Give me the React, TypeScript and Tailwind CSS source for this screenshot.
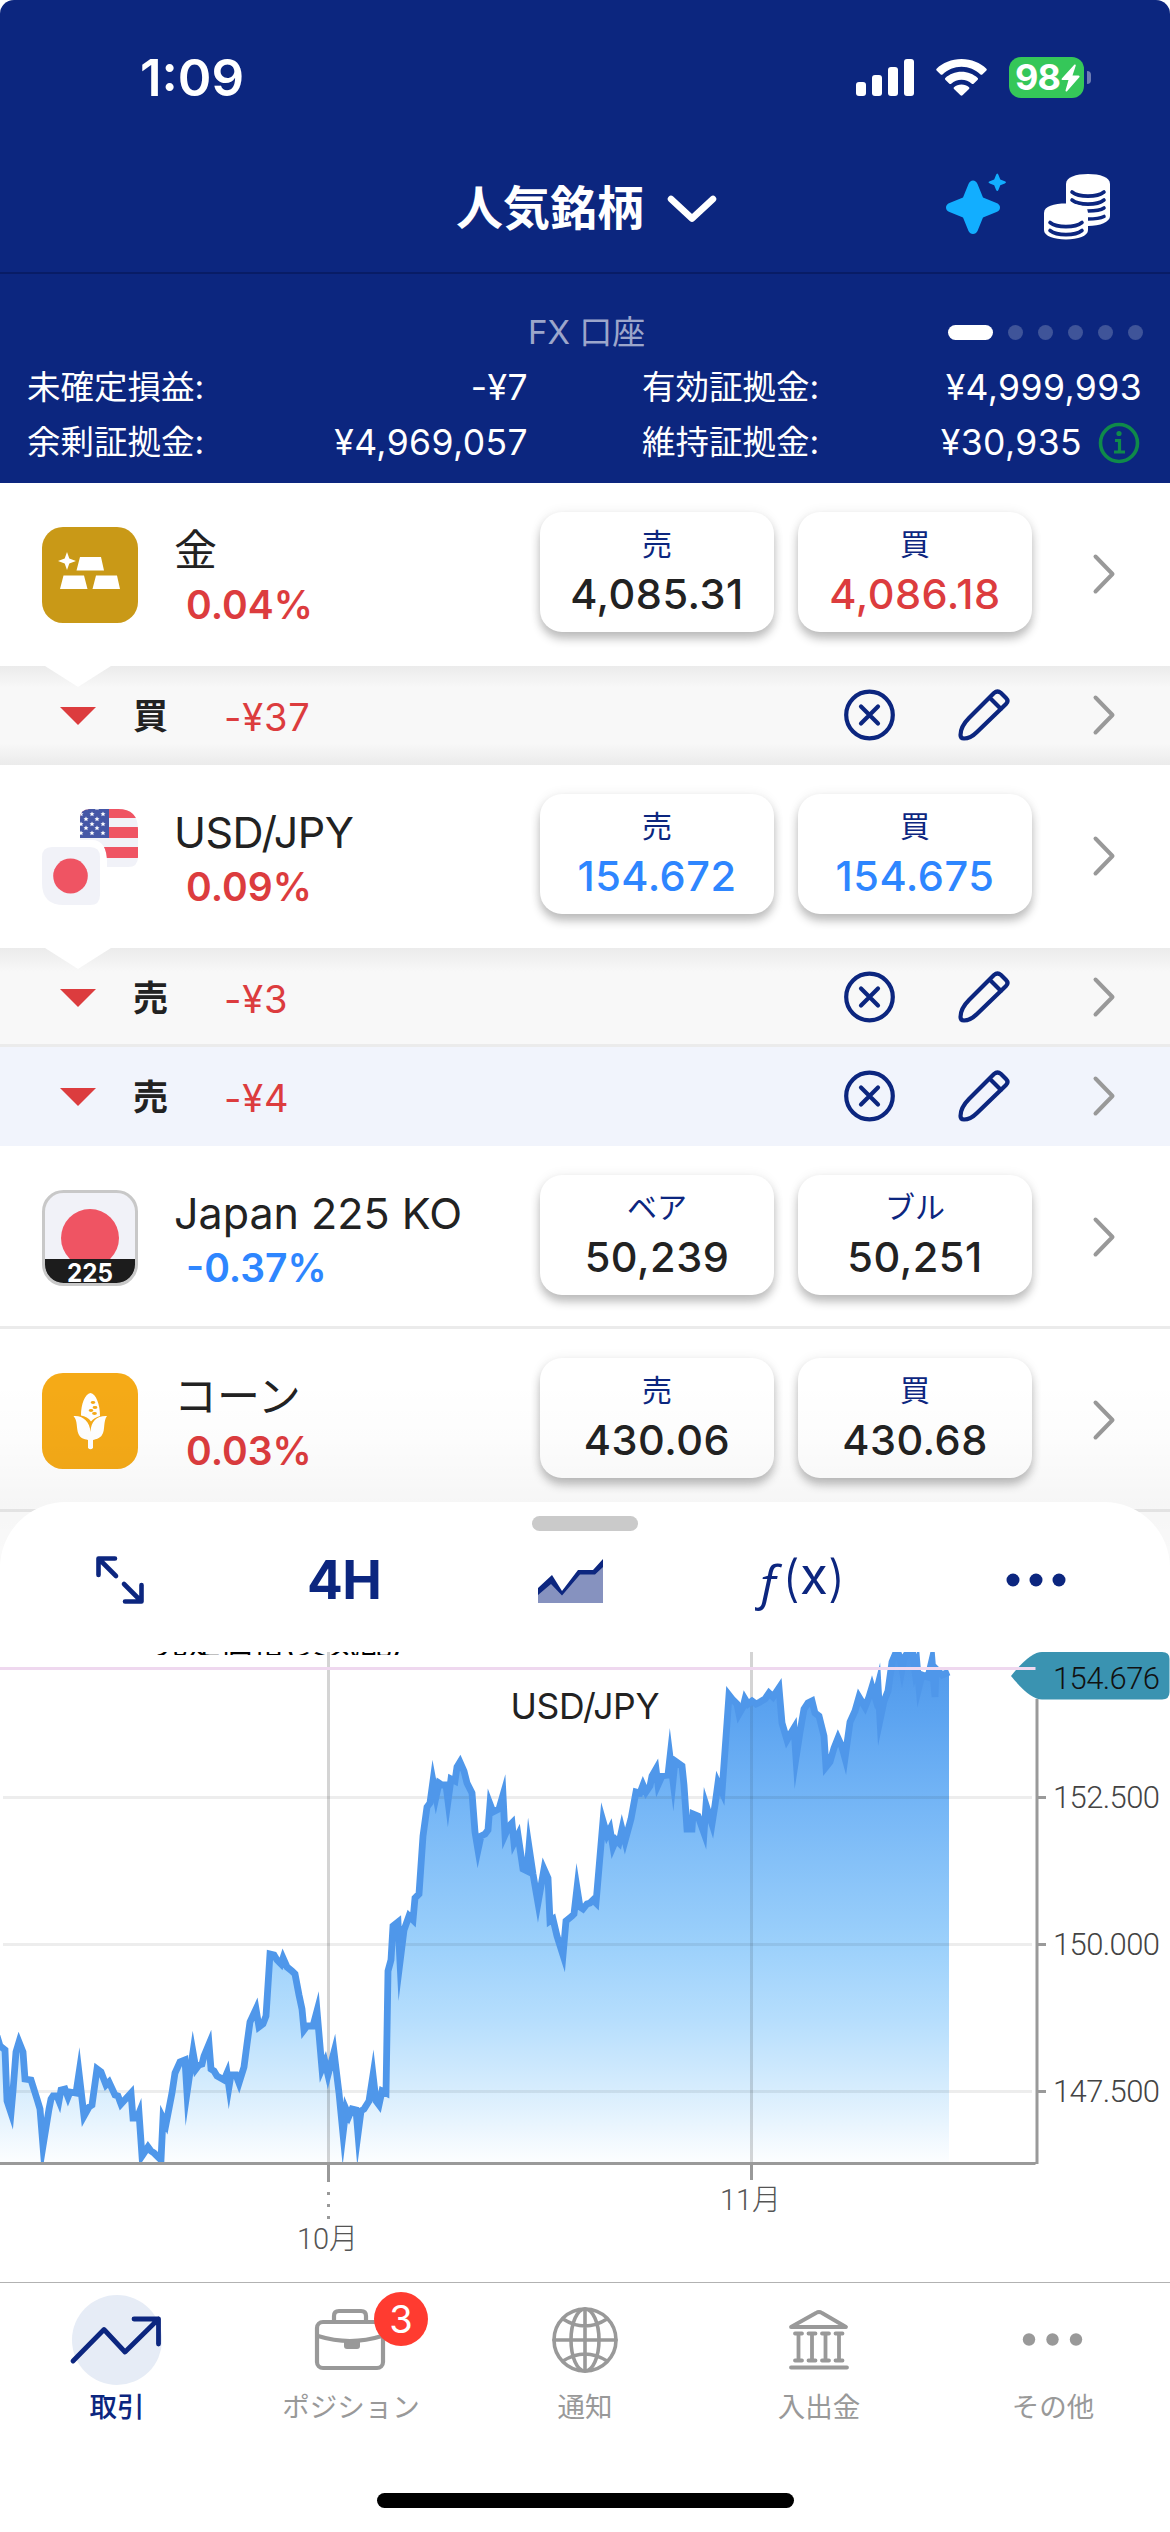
import React from "react";

const NAVY = "#0c267f";

const SERIES: [number, number][] = [
  [-3, 384], [0, 394], [5, 398], [7, 449], [11, 461], [13, 439], [16, 400], [19, 390], [23, 400], [25, 427], [31, 428],
  [37, 447], [40, 457], [43, 494], [49, 457], [51, 447], [53, 444], [57, 444], [59, 449], [61, 438], [65, 437],
  [68, 445], [70, 440], [76, 441], [79, 421], [84, 464], [89, 455], [92, 453], [97, 417], [101, 420], [106, 433],
  [109, 430], [115, 443], [118, 444], [121, 452], [131, 441], [133, 466], [137, 466], [139, 461], [142, 504],
  [148, 495], [151, 499], [154, 501], [161, 508], [163, 466], [166, 472], [172, 441], [175, 421], [180, 410],
  [185, 408], [187, 441], [193, 400], [196, 417], [199, 413], [202, 412], [204, 404], [209, 392], [211, 417],
  [214, 419], [217, 424], [224, 428], [227, 421], [229, 435], [231, 423], [236, 423], [239, 431], [244, 415],
  [247, 392], [250, 370], [256, 357], [259, 375], [263, 372], [266, 364], [270, 302], [274, 303], [277, 308],
  [281, 312], [283, 306], [287, 315], [292, 319], [295, 322], [299, 343], [302, 357], [304, 378], [307, 374],
  [313, 374], [317, 359], [322, 417], [325, 410], [328, 423], [334, 400], [339, 441], [343, 482], [346, 457],
  [349, 464], [352, 457], [356, 458], [358, 482], [361, 459], [364, 457], [369, 449], [373, 423], [376, 449],
  [379, 453], [382, 439], [386, 441], [388, 319], [391, 308], [393, 274], [398, 270], [400, 310], [404, 278],
  [409, 264], [413, 268], [415, 246], [419, 242], [423, 184], [427, 155], [430, 151], [433, 129], [436, 145],
  [439, 131], [442, 133], [446, 133], [448, 149], [451, 127], [455, 129], [457, 115], [460, 110], [464, 119],
  [467, 131], [472, 141], [475, 180], [478, 198], [481, 184], [485, 182], [488, 178], [490, 152], [493, 160],
  [499, 157], [503, 143], [505, 183], [509, 174], [512, 171], [514, 191], [518, 183], [523, 217], [527, 219],
  [529, 195], [533, 222], [538, 251], [544, 217], [548, 226], [550, 269], [553, 267], [557, 284], [563, 303],
  [566, 269], [572, 264], [574, 262], [577, 236], [580, 255], [583, 257], [587, 252], [590, 251], [593, 248],
  [596, 251], [603, 169], [607, 183], [610, 177], [613, 195], [616, 188], [619, 191], [622, 177], [625, 189],
  [631, 167], [636, 140], [640, 141], [643, 133], [646, 140], [650, 134], [652, 124], [656, 117], [658, 133],
  [662, 124], [668, 123], [670, 105], [673, 129], [675, 109], [682, 114], [684, 133], [687, 177], [692, 177],
  [693, 162], [698, 164], [704, 181], [706, 153], [712, 172], [715, 153], [718, 131], [722, 140], [727, 71],
  [729, 43], [733, 48], [737, 52], [739, 62], [743, 55], [745, 47], [748, 52], [752, 49], [756, 52], [760, 50],
  [765, 47], [769, 41], [773, 45], [779, 36], [782, 71], [787, 88], [791, 81], [794, 76], [796, 106], [800, 80],
  [804, 57], [808, 51], [812, 49], [815, 61], [819, 64], [824, 84], [826, 115], [830, 110], [834, 96], [838, 86],
  [842, 95], [845, 106], [850, 70], [855, 59], [859, 45], [865, 55], [869, 45], [872, 35], [875, 45], [878, 33],
  [880, 68], [884, 49], [888, 39], [892, 10], [897, -2], [900, 6], [902, 17], [904, 6], [908, 0], [912, -4],
  [915, 19], [917, 12], [919, 35], [922, 23], [928, 25], [932, 8], [935, 45], [936, 17], [942, 23], [949, 20],
];

const LINE = SERIES.map(([x, y], i) => `${i ? "L" : "M"}${x} ${y}`).join("");

function StatusBar() {
  return (
    <div className="flex h-[156px] items-start text-white">
      <div className="ml-[140px] mt-[48px] w-[110px] text-[51px] leading-[60px] font-semibold tracking-[0px]">1:09</div>
      <svg className="ml-[606px] mt-[59px]" width="58" height="37" fill="#fff">
        <rect x="0" y="23" width="10" height="14" rx="3" />
        <rect x="16" y="16" width="10" height="21" rx="3" />
        <rect x="32" y="8" width="10" height="29" rx="3" />
        <rect x="48" y="0" width="10" height="37" rx="3" />
      </svg>
      <svg className="ml-[22px] mt-[59px]" width="51" height="37" viewBox="0 0 51 37" fill="#fff">
        <path d="M25.5 0C35.500 0 44.300 3.800 50.400 9.700Q51.200 10.600 50.400 11.500L46.300 15.500Q45.400 16.200 44.500 15.500C39.500 10.700 32.800 7.800 25.500 7.800S11.500 10.700 6.500 15.500Q5.600 16.200 4.700 15.500L.6 11.500Q-.2 10.600 .6 9.700C6.700 3.800 15.500 0 25.500 0Z" />
        <path d="M25.500 12.800C31.800 12.800 37.500 15.200 41.700 19Q42.500 19.900 41.700 20.700L37.600 24.700Q36.700 25.400 35.800 24.700C33 22.200 29.400 20.700 25.500 20.700S18 22.200 15.200 24.700Q14.300 25.400 13.400 24.700L9.300 20.700Q8.500 19.900 9.300 19C13.500 15.200 19.200 12.800 25.500 12.800Z" />
        <path d="M25.500 25.500C28.400 25.500 31 26.500 33 28.200Q33.800 29 33 29.900L26.500 36.300Q25.500 37.200 24.500 36.300L18 29.900Q17.200 29 18 28.200C20 26.500 22.600 25.500 25.500 25.500Z" />
      </svg>
      <div className="ml-[22px] mt-[57px] flex h-[41px] w-[75px] items-center rounded-[12px] bg-[#35c759] pl-[6px]">
        <span className="w-[46px] text-[36px] leading-[41px] font-bold tracking-[-1px]">98</span>
        <svg width="19" height="28" viewBox="0 0 19 28" fill="#fff">
          <path d="M13.500.5L.8 14.500Q0 16 1.500 16H7.500L4.500 26.500Q4.500 28 6 27.300L18.500 13Q19 11.500 17.500 11.500H11.500L14.800 1.500Q14.800 0 13.500.5Z" />
        </svg>
      </div>
      <div className="ml-[3px] mt-[71px] h-[13px] w-[4px] rounded-r-full bg-white/40" />
    </div>
  );
}

function TitleBar() {
  return (
    <div className="flex h-[118px] items-start border-b-2 border-[#081c66] text-white">
      <div className="ml-[456px] mt-[19px] w-[200px] text-[47px] leading-[66px] font-bold">人気銘柄</div>
      <svg className="ml-[10px] mt-[38px]" width="52" height="30" fill="none" stroke="#fff" strokeWidth="6.500" strokeLinecap="round" strokeLinejoin="round">
        <path d="M5 5L26 24.500L47 5" />
      </svg>
      <svg className="ml-[228px] mt-[16px]" width="62" height="64" viewBox="0 0 62 64" fill="#12aeff">
        <path d="M27 8.500Q30 8.500 31.500 12L37 25.500L50.500 31Q54 32.500 54 35.500T50.500 40L37 45.500L31.500 59Q30 62 27 62T22.500 59L17 45.500L3.500 40Q0 38.500 0 35.500T3.500 31L17 25.500L22.500 12Q24 8.500 27 8.500Z" />
        <path d="M51.300 1.500Q52 1.500 52.500 3L54.300 7.500L58.800 9.300Q60 9.800 60 10.300T58.800 11.400L54.300 13.200L52.500 17.700Q52 19 51.300 19T50 17.700L48.200 13.200L43.800 11.400Q42.500 10.800 42.500 10.300T43.800 9.300L48.200 7.500L50 3Q50.500 1.500 51.300 1.500Z" />
      </svg>
      <svg className="ml-[36px] mt-[17px]" width="68" height="68" viewBox="0 0 68 68">
        <path d="M22 11C22 4 32 1 44 1S66 4 66 11V43C66 49 56 53 44 53S22 49 22 43Z" fill="#fff" />
        <g fill="none" stroke={NAVY} strokeWidth="3.600" strokeLinecap="round">
          <path d="M28 19C35 24.500 53 24.500 60 19M28 27C35 32.500 53 32.500 60 27M44 38C52 38 57 37 60 35M44 46C52 46 57 45 60 43.500" />
        </g>
        <path d="M0 40C0 33 10 30.500 22 30.500S44 33 44 40V57C44 63 34 66.500 22 66.500S0 63 0 57Z" fill="#fff" />
        <path d="M6 49.500C13 55 31 55 38 49.500M6 57.500C13 63 31 63 38 57.500" fill="none" stroke={NAVY} strokeWidth="3.600" strokeLinecap="round" />
      </svg>
    </div>
  );
}

function Account() {
  return (
    <div className="h-[209px] pt-[36px] text-[35.500px] tracking-[0.400px] text-white">
      <div className="flex h-[44px] items-center">
        <div className="ml-[528px] w-[420px] text-[33px] leading-[44px] tracking-normal text-white/60">FX 口座</div>
        <div className="h-[15px] w-[45px] rounded-full bg-white" />
        <div className="ml-[15px] flex gap-[15px]">
          {[0, 1, 2, 3, 4].map((i) => (
            <div key={i} className="size-[15px] rounded-full bg-[#3f5499]" />
          ))}
        </div>
      </div>
      <div className="mt-[6px] flex h-[55px] items-center leading-[55px]">
        <div className="ml-[27px] w-[221px] text-[33.500px] tracking-normal">未確定損益:</div>
        <div className="w-[280px] text-right">-¥7</div>
        <div className="ml-[114px] w-[220px] text-[33.500px] tracking-normal">有効証拠金:</div>
        <div className="w-[280px] text-right">¥4,999,993</div>
      </div>
      <div className="flex h-[55px] items-center leading-[55px]">
        <div className="ml-[27px] w-[221px] text-[33.500px] tracking-normal">余剰証拠金:</div>
        <div className="w-[280px] text-right">¥4,969,057</div>
        <div className="ml-[114px] w-[220px] text-[33.500px] tracking-normal">維持証拠金:</div>
        <div className="w-[220px] text-right">¥30,935</div>
        <svg className="ml-[16px]" width="42" height="42" fill="none" stroke="#0f8a4a" strokeWidth="3.600">
          <circle cx="21" cy="21" r="18.500" />
          <path d="M17 18.500H21.500V29.500M16 30H27" strokeWidth="3.200" />
          <circle cx="21" cy="11.500" r="2.600" fill="#0f8a4a" stroke="none" />
        </svg>
      </div>
    </div>
  );
}

function GoldIcon() {
  return (
    <svg width="96" height="96" fill="#fff">
      <rect width="96" height="96" rx="21" fill="#c99917" />
      <path d="M38 30H59L62 43.500H34.500ZM21.500 48.500H42L45.500 62H18ZM54 48.500H75L78 62H50.500ZM25 25L27.300 31.500L34 34L27.300 36.500L25 43L22.700 36.500L16 34L22.700 31.500Z" />
    </svg>
  );
}

function UsdJpyIcon() {
  const stars = [
    [44, -1], [55, -1], [50, 5], [61, 5], [44, 10], [55, 10], [50, 15], [61, 15], [44, 19], [55, 19], [50, 24], [61, 24], [39, 5], [39, 15], [39, 24],
  ];
  return (
    <svg width="96" height="96">
      <clipPath id="us">
        <path d="M48 0H76Q96 0 96 20V48Q96 58 86 58H65V54Q65 31 50 31H38V10Q38 0 48 0Z" />
      </clipPath>
      <g clipPath="url(#us)">
        <rect x="38" width="58" height="58" fill="#f1f2f8" />
        <path d="M38 0H96V9H38ZM38 18H96V29H38ZM38 38H96V49H38Z" fill="#ef5463" />
        <rect x="38" width="29" height="29" fill="#4557a6" />
        {stars.map(([x, y]) => (
          <path key={`${x}-${y}`} transform={`translate(${x} ${y})`} d="M0-2.500L.8-.8L2.500-.7L1.200.5L1.600 2.300L0 1.300L-1.600 2.300L-1.200.5L-2.500-.7L-.8-.8Z" fill="#fff" />
        ))}
      </g>
      <path d="M10 38H48Q58 38 58 48V86Q58 96 48 96H22Q0 96 0 74V48Q0 38 10 38Z" fill="#f1f2f8" />
      <ellipse cx="28.500" cy="67" rx="17.300" ry="17.500" fill="#ef5463" />
    </svg>
  );
}

function Japan225Icon() {
  return (
    <svg width="96" height="96">
      <clipPath id="jp225">
        <rect x="2.500" y="2.500" width="91" height="91" rx="19" />
      </clipPath>
      <g clipPath="url(#jp225)">
        <rect width="96" height="96" fill="#f1f2f8" />
        <circle cx="48" cy="48" r="29" fill="#ef5463" />
        <rect y="69" width="96" height="27" fill="#1c1c1c" />
      </g>
      <text x="48" y="92" textAnchor="middle" fontSize="26" fontWeight="700" textLength="46" lengthAdjust="spacingAndGlyphs" fill="#fff">225</text>
      <rect x="1.500" y="1.500" width="93" height="93" rx="20" fill="none" stroke="#c8c8c8" strokeWidth="3" />
    </svg>
  );
}

function CornIcon() {
  return (
    <svg width="96" height="96" fill="#fff">
      <rect width="96" height="96" rx="21" fill="#f5aa17" />
      <path d="M48.500 20C54 21 58 31 58 43C54 44 51 46 49 48.500C47 45 43 43 39 42.500C39 31 43 21 48.500 20Z" />
      <path d="M31.500 43C40 42 48 48 48.500 59C49 48 55 42.500 65 43C61 48 63.500 57 60 62C58 65.500 54 66 51 67V75Q48.500 77.500 46 75V67C42 66 38 65 36.500 61C34 55 36 48 31.500 43Z" />
      <g fill="#f5aa17">
        <ellipse cx="51" cy="29.500" rx="2.200" ry="1.400" />
        <ellipse cx="53" cy="34.500" rx="2.400" ry="1.400" />
        <ellipse cx="49" cy="37.500" rx="2.200" ry="1.400" />
        <ellipse cx="52.500" cy="40.500" rx="2.400" ry="1.400" />
      </g>
    </svg>
  );
}

function Chevron({ className }: { className: string }) {
  return (
    <svg className={className} width="24" height="42" fill="none" stroke="#999" strokeWidth="4" strokeLinecap="round" strokeLinejoin="round">
      <path d="M3.500 3.500L20.500 21L3.500 38.500" />
    </svg>
  );
}

function Quote({ label, value, tone }: { label: string; value: string; tone: string }) {
  return (
    <div className="h-[120px] w-[234px] rounded-[22px] bg-white text-center shadow-[0_7px_10px_rgba(0,0,0,0.24),0_0_12px_rgba(0,0,0,0.07)]">
      <div className="mt-[11px] h-[42px] text-[30px] leading-[42px] text-[#0c267f]">{label}</div>
      <div className={`mt-[4px] h-[50px] text-[41.500px] leading-[50px] font-medium tracking-[0.500px] ${tone}`}>{value}</div>
    </div>
  );
}

const BLACK = "text-[#222]";
const RED = "text-[#dc3c3e]";
const BLUE = "text-[#2e86ff]";

interface RowProps {
  icon: React.ReactNode;
  name: string;
  change: string;
  changeTone: string;
  quotes: [string, string, string][];
  divider?: boolean;
}

function InstrumentRow({ icon, name, change, changeTone, quotes, divider }: RowProps) {
  return (
    <div className={`flex h-[183px] items-start bg-white ${divider ? "border-b-3 border-[#ebebeb]" : ""}`}>
      <div className="mt-[44px] ml-[42px] w-[96px]">{icon}</div>
      <div className="mt-[40px] ml-[36px] w-[366px]">
        <div className={`h-[54px] text-[43px] leading-[54px] whitespace-nowrap text-[#222] ${name === "USD/JPY" ? "tracking-[-0.500px]" : ""}`}>{name}</div>
        <div className={`mt-[1px] h-[54px] pl-[12px] text-[39px] leading-[54px] font-semibold ${changeTone}`}>{change}</div>
      </div>
      <div className="mt-[29px] flex gap-[24px]">
        {quotes.map(([label, value, tone]) => (
          <Quote key={label} label={label} value={value} tone={tone} />
        ))}
      </div>
      <Chevron className="mt-[70px] ml-[60px]" />
    </div>
  );
}

interface PositionProps {
  side: string;
  amount: string;
  look: string;
  notch?: boolean;
}

function PositionRow({ side, amount, look, notch }: PositionProps) {
  return (
    <div className={`relative flex h-[99px] items-start ${look}`}>
      {notch && (
        <svg className="absolute top-0 left-[45px]" width="66" height="21">
          <path d="M0 0H66L33 21Z" fill="#fff" />
        </svg>
      )}
      <svg className="mt-[41px] ml-[60px]" width="36" height="18">
        <path d="M0 0H36L18 18Z" fill="#dc3c3e" />
      </svg>
      <div className="mt-[24px] ml-[37px] w-[91px] text-[35px] leading-[52px] font-bold text-[#222]">{side}</div>
      <div className="mt-[25px] w-[620px] text-[38px] leading-[52px] tracking-[0.800px] text-[#dc3c3e]">{amount}</div>
      <svg className="mt-[23px]" width="52" height="52" fill="none" stroke={NAVY} strokeWidth="4.200" strokeLinecap="round">
        <circle cx="25.500" cy="26" r="23.300" />
        <path d="M17 17.500L34 34.500M34 17.500L17 34.500" />
      </svg>
      <svg className="mt-[23px] ml-[62px]" width="52" height="52" fill="none" stroke={NAVY} strokeWidth="4.200" strokeLinecap="round" strokeLinejoin="round">
        <path d="M36 4L11 29C5 35 2.500 41 2.500 46Q2.500 49.500 6 49.500C10 49.500 15 47 19 43L48 15Q51 12 48 9L43 4Q39.500 1 36 4ZM32 9L43 20" />
      </svg>
      <Chevron className="mt-[28px] ml-[82px]" />
    </div>
  );
}

function Toolbar() {
  return (
    <div className="flex h-[98px] items-center text-[#0c267f]">
      <svg className="ml-[95px]" width="50" height="50" fill="none" stroke={NAVY} strokeWidth="4.600" strokeLinecap="round" strokeLinejoin="round">
        <path d="M3.500 20V3.500H20M4 4L21 21M46.500 30V46.500H30M46 46L29 29" />
      </svg>
      <div className="ml-[162px] w-[77px] text-[53px] leading-[60px] font-bold tracking-[-0.500px]">4H</div>
      <svg className="mt-[2px] ml-[153px]" width="68" height="46">
        <path d="M1 31L15 19L25 34L41 13H56L66 4V45H1Z" fill="#8692bf" />
        <path d="M1 30L15 17L25 33L41 12H56L66 1V9L58 16.500H43L25 37.500L14 26L1 37Z" fill={NAVY} />
      </svg>
      <div className="ml-[150px] flex w-[94px] items-center">
        <span className="font-['Open_Sans'] text-[50px] leading-[56px] italic">ƒ</span>
        <span className="-mt-[4px] text-[50px] leading-[56px] font-light">(</span>
        <span className="-mt-[8px] text-[51px] leading-[56px] font-normal">x</span>
        <span className="-mt-[4px] text-[50px] leading-[56px] font-light">)</span>
      </div>
      <svg className="ml-[157px]" width="60" height="14" fill={NAVY}>
        <circle cx="7" cy="7" r="6.500" />
        <circle cx="30" cy="7" r="6.500" />
        <circle cx="53" cy="7" r="6.500" />
      </svg>
    </div>
  );
}

function Chart() {
  return (
    <div className="relative h-[630px] overflow-hidden bg-white">
      <svg width="1170" height="630" viewBox="0 0 1170 630" fontFamily="Roboto, 'Noto Sans CJK JP', sans-serif" fontWeight="300">
        <defs>
          <linearGradient id="fill" gradientUnits="userSpaceOnUse" x1="0" y1="0" x2="0" y2="511">
            <stop offset="0" stopColor="#4f97ea" />
            <stop offset="0.120" stopColor="#5ba3f0" />
            <stop offset="0.300" stopColor="#75b6f6" />
            <stop offset="0.580" stopColor="#9dd1fb" />
            <stop offset="0.720" stopColor="#b6defd" />
            <stop offset="0.850" stopColor="#d5ecfd" />
            <stop offset="1" stopColor="#fdfeff" />
          </linearGradient>
          <linearGradient id="month" gradientUnits="userSpaceOnUse" x1="0" y1="50" x2="0" y2="511">
            <stop offset="0" stopColor="#000" stopOpacity="0.080" />
            <stop offset="0.550" stopColor="#000" stopOpacity="0.110" />
            <stop offset="1" stopColor="#000" stopOpacity="0.160" />
          </linearGradient>
          <clipPath id="plot">
            <rect width="1036" height="511" />
          </clipPath>
        </defs>
        <path d={`${LINE}V511H-3Z`} fill="url(#fill)" />
        <path d="M3 145.500H1032M3 292.500H1032M3 439.500H1032" stroke="#000" strokeOpacity="0.070" strokeWidth="3" />
        <path d="M328.500 0V510M751.500 0V50" stroke="#000" strokeOpacity="0.170" strokeWidth="3" />
        <rect x="750" y="50" width="3" height="460" fill="url(#month)" />
        <path d={LINE} fill="none" stroke="#4f97ea" strokeWidth="6.800" strokeMiterlimit="14" clipPath="url(#plot)" />
        <path d="M0 511.500H1035.500M1037 47V512M1038 145.500H1046M1038 292.500H1046M1038 439.500H1046" fill="none" stroke="#9a9a9a" strokeWidth="3" />
        <path d="M328.500 512V530M751.500 512V528" stroke="#999" strokeWidth="3" />
        <path d="M328.500 540V568" stroke="#999" strokeWidth="3" strokeDasharray="3 9" />
        <path d="M1011 24Q1030 0 1042 0H1162Q1169.500 0 1169.500 7V40Q1169.500 47.500 1162 47.500H1042Q1030 47.500 1011 24Z" fill="#3a93b1" />
        <path d="M0 16.500H1035.500" stroke="#efd8ef" strokeWidth="3" />
        <g fontSize="31">
          <text x="1053" y="36.500" textLength="107" fill="#111">154.676</text>
          <g fill="#444">
            <text x="1053" y="155.500" textLength="107">152.500</text>
            <text x="1053" y="302.500" textLength="107">150.000</text>
            <text x="1053" y="449.500" textLength="107">147.500</text>
          </g>
          <g fill="#555" fontSize="29">
            <text x="297" y="597" textLength="61">10月</text>
            <text x="720" y="558" textLength="61">11月</text>
          </g>
        </g>
        <text x="585" y="67" textAnchor="middle" fontFamily="Inter, sans-serif" fontWeight="400" fontSize="35.500" textLength="149" fill="#222">USD/JPY</text>
      </svg>
      <div className="absolute top-0 left-[156px] flex h-[3px] w-[260px] items-end overflow-hidden">
        <div className="-mb-[12px] text-[32px] leading-[48px] whitespace-nowrap text-black">売足価格(買気配)</div>
      </div>
    </div>
  );
}

function Tab({ label, active, children }: { label: string; active?: boolean; children: React.ReactNode }) {
  return (
    <div className="flex w-[234px] flex-col items-center pt-[12px]">
      <div className="relative h-[92px] w-[100px]">{children}</div>
      <div className={`mt-[2px] text-[27.500px] leading-[36px] whitespace-nowrap ${active ? "font-medium text-[#0c267f]" : "text-[#999]"}`}>{label}</div>
    </div>
  );
}

function TabBar() {
  const line = { fill: "none", stroke: "#999", strokeLinecap: "round" as const, strokeLinejoin: "round" as const };
  return (
    <div className="flex h-[211px] border-t border-[#b2b2b2] bg-white">
      <Tab label="取引" active>
        <svg width="100" height="92">
          <circle cx="50" cy="45" r="45" fill="#e6ecf6" />
          <path d="M6 66L37 34.500L58 57L91.500 24M67 24H91.500V49" fill="none" stroke={NAVY} strokeWidth="4.800" strokeLinecap="round" strokeLinejoin="round" />
        </svg>
      </Tab>
      <Tab label="ポジション">
        <svg width="100" height="92" {...line} strokeWidth="4.200">
          <rect x="16" y="27" width="66" height="46" rx="6" />
          <path d="M33 26V21Q33 16 38 16H60Q65 16 65 21V26M17 41Q49 51 81 41" />
          <path d="M43 45H59V51Q59 54 56 54H46Q43 54 43 51Z" fill="#999" stroke="none" />
        </svg>
        <div className="absolute top-[-3px] left-[73px] flex size-[54px] items-center justify-center rounded-full bg-[#ff3b30] text-[38px] leading-none text-white">3</div>
      </Tab>
      <Tab label="通知">
        <svg width="100" height="92" {...line} strokeWidth="3.600">
          <circle cx="50" cy="45" r="31" />
          <ellipse cx="50" cy="45" rx="14" ry="31" />
          <path d="M50 14V76M19 45H81M28 24Q50 38 72 24M28 66Q50 52 72 66" />
        </svg>
      </Tab>
      <Tab label="入出金">
        <svg width="100" height="92" {...line} strokeWidth="3.800">
          <path d="M22 32L47 18Q50 16 53 18L77 32ZM22 72.500H78" />
          <path d="M26 38.500H33M39.500 38.500H46.500M53 38.500H60M66.500 38.500H73.500M26 65.500H33M39.500 65.500H46.500M53 65.500H60M66.500 65.500H73.500M29.500 39V65M43 39V65M56.500 39V65M70 39V65" />
        </svg>
      </Tab>
      <Tab label="その他">
        <svg width="100" height="92" fill="#999">
          <circle cx="26" cy="44.500" r="6.200" />
          <circle cx="49.500" cy="44.500" r="6.200" />
          <circle cx="73" cy="44.500" r="6.200" />
        </svg>
      </Tab>
    </div>
  );
}

export default function App() {
  return (
    <div className="h-[2532px] w-[1170px] overflow-hidden bg-white font-[Inter,'Noto_Sans_CJK_JP',sans-serif]">
      <header className="h-[483px] rounded-t-[14px] bg-[#0c267f]">
        <StatusBar />
        <TitleBar />
        <Account />
      </header>
      <main className="relative h-[1019px]">
        <InstrumentRow icon={<GoldIcon />} name="金" change="0.04%" changeTone={RED} quotes={[["売", "4,085.31", BLACK], ["買", "4,086.18", RED]]} />
        <PositionRow side="買" amount="-¥37" notch look="bg-[#f8f8f8] bg-linear-[to_bottom,#ebebeb,#f8f8f8_22%,#f8f8f8_78%,#ebebeb]" />
        <InstrumentRow icon={<UsdJpyIcon />} name="USD/JPY" change="0.09%" changeTone={RED} quotes={[["売", "154.672", BLUE], ["買", "154.675", BLUE]]} />
        <PositionRow side="売" amount="-¥3" notch look="border-b-3 border-[#ebebeb] bg-linear-[to_bottom,#ebebeb,#f8f8f8_25%]" />
        <PositionRow side="売" amount="-¥4" look="bg-[#f1f4fc]" />
        <InstrumentRow icon={<Japan225Icon />} name="Japan 225 KO" change="-0.37%" changeTone={BLUE} quotes={[["ベア", "50,239", BLACK], ["ブル", "50,251", BLACK]]} divider />
        <InstrumentRow icon={<CornIcon />} name="コーン" change="0.03%" changeTone={RED} quotes={[["売", "430.06", BLACK], ["買", "430.68", BLACK]]} divider />
        <div className="h-[60px] bg-white" />
        <div className="absolute inset-x-0 bottom-[-70px] h-[190px] bg-linear-[to_bottom,rgba(0,0,0,0),rgba(0,0,0,0.012)_30%,rgba(0,0,0,0.035)_64%,rgba(0,0,0,0.02)]" />
      </main>
      <section className="relative h-[780px] overflow-hidden rounded-t-[66px] bg-white">
        <div className="flex h-[29px] justify-center pt-[14px]">
          <div className="h-[15px] w-[106px] rounded-full bg-[#cacaca]" />
        </div>
        <Toolbar />
        <div className="h-[23px]" />
        <Chart />
      </section>
      <TabBar />
      <div className="flex justify-center">
        <div className="h-[15px] w-[417px] rounded-full bg-black" />
      </div>
    </div>
  );
}
